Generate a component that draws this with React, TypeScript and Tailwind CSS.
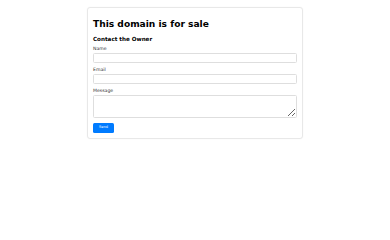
export default function App() {
  return (
    <div className="min-h-[240px] bg-white pt-[7px]" style={{ fontFamily: '"DejaVu Sans", sans-serif' }}>
      <div className="mx-auto w-[216px] rounded-[3px] border border-[#e8e8e8] bg-white px-[5px] pt-[10px] pb-[5px] shadow-[0_0_2px_rgba(0,0,0,0.04)]">
        <h1 className="text-[9.1px] font-bold leading-[12px] text-black">This domain is for sale</h1>
        <h2 className="mt-[6px] text-[5.6px] font-bold leading-[7px] text-black">Contact the Owner</h2>
        <form className="mt-[3px] flex flex-col" onSubmit={(e) => e.preventDefault()}>
          <label className="text-[4.6px] leading-[6px] text-[#333]">Name</label>
          <input className="mt-[1px] h-[10px] w-full rounded-[1.5px] border border-[#dedede]" />
          <label className="mt-[4px] text-[4.6px] leading-[6px] text-[#333]">Email</label>
          <input className="mt-[1px] h-[10px] w-full rounded-[1.5px] border border-[#dedede]" />
          <label className="mt-[4px] text-[4.6px] leading-[6px] text-[#333]">Message</label>
          <textarea className="mt-[1px] h-[23px] w-full resize-y rounded-[1.5px] border border-[#dedede]" />
          <button className="mt-[5px] h-[10px] w-[21px] rounded-[1.5px] bg-[#007bff] text-[3.5px] text-white">Send</button>
        </form>
      </div>
    </div>
  )
}
